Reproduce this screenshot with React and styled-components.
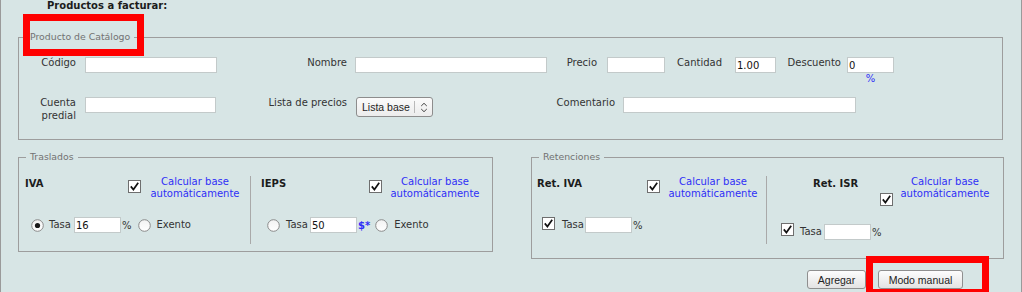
import React from 'react';
import styled, { createGlobalStyle } from 'styled-components';

const GlobalStyle = createGlobalStyle`
  html, body { margin: 0; padding: 0; background: #d7e5e5; }
  body { font-family: "DejaVu Sans", sans-serif; }
`;

const Page = styled.div`
  position: relative;
  box-sizing: border-box;
  width: 1022px;
  height: 292px;
  overflow: hidden;
  background: #d7e5e5;
  border-left: 1px solid #9a9a9a;
  border-right: 1px solid #9a9a9a;
  font-family: "DejaVu Sans", sans-serif;
  font-size: 10px;
  color: #2e2e2e;
`;

const Heading = styled.div`
  padding-left: 46px;
  font-weight: bold;
  font-size: 10px;
  line-height: 12px;
  color: #1c1c1c;
`;

const Fieldset = styled.fieldset`
  box-sizing: border-box;
  flex: none;
  min-width: 0;
  width: ${p => p.$w}px;
  margin: ${p => p.$mt}px 0 0 ${p => p.$ml}px;
  padding: ${p => p.$pt}px 0 ${p => p.$pb}px 0;
  border: 1px solid #9d9d9d;
`;

const Legend = styled.legend`
  margin-left: 7px;
  padding: 0 4px;
  font-size: 9.33px;
  line-height: 12px;
  color: #727272;
`;

const FormRow = styled.div`
  display: flex;
  align-items: flex-start;
  height: ${p => p.$h}px;
`;

const FieldLabel = styled.label`
  box-sizing: border-box;
  flex: none;
  width: ${p => p.$w}px;
  margin-top: -1px;
  text-align: right;
  line-height: 13px;
  color: #333;
`;

const TextInput = styled.input`
  box-sizing: border-box;
  flex: none;
  width: ${p => p.$w}px;
  height: 16px;
  margin: 0 0 0 ${p => p.$ml || 0}px;
  padding: 0 1px;
  border: 1px solid #c3caca;
  background: #fff;
  font: 10px "DejaVu Sans", sans-serif;
  color: #111;
  outline: none;
`;

const InputStack = styled.div`
  display: flex;
  flex-direction: column;
  align-items: center;
  margin-left: ${p => p.$ml}px;
`;

const Unit = styled.span`
  color: ${p => (p.$blue ? '#2f2ff7' : '#333')};
  font-weight: ${p => (p.$bold ? 'bold' : 'normal')};
  font-size: 10px;
  line-height: 11px;
  margin-left: ${p => p.$ml || 0}px;
  flex: none;
`;

const SelectBox = styled.div`
  box-sizing: border-box;
  flex: none;
  display: flex;
  align-items: center;
  width: ${p => p.$w}px;
  height: 20px;
  margin-left: ${p => p.$ml}px;
  padding-left: 5px;
  border: 1px solid #8d8d8d;
  border-radius: 3px;
  background: linear-gradient(#fbfbfb, #ececec);
  font: 10.5px "Liberation Sans", Arial, sans-serif;
  color: #1e1e1e;
`;

const SelectSep = styled.span`
  width: 1px;
  height: 12px;
  margin: 0 5px 0 4px;
  background: #b9b9b9;
`;

const SplitRow = styled.div`
  display: flex;
  align-items: flex-start;
`;

const TaxSection = styled.div`
  box-sizing: border-box;
  flex: none;
  width: ${p => p.$w}px;
  height: 68px;
  display: flex;
  flex-direction: column;
  border-right: ${p => (p.$divider ? '1px solid #a9a9a9' : 'none')};
`;

const SectionHead = styled.div`
  display: flex;
  align-items: flex-start;
  height: ${p => p.$h}px;
`;

const TaxTitle = styled.div`
  flex: none;
  width: ${p => p.$w}px;
  margin: 2px 0 0 ${p => p.$ml}px;
  font-weight: bold;
  line-height: 12px;
  color: #1c1c1c;
`;

const BoxWrap = styled.span`
  display: block;
  flex: none;
  line-height: 0;
  margin-top: ${p => p.$mt || 0}px;
  margin-left: ${p => p.$ml || 0}px;
  align-self: ${p => p.$self || 'auto'};
`;

const AutoCalc = styled.a`
  display: block;
  flex: none;
  width: ${p => p.$w}px;
  text-align: center;
  line-height: 12px;
  color: #2f2ff7;
  text-decoration: none;
`;

const SectionBody = styled.div`
  display: flex;
  align-items: center;
  height: 16px;
  margin-top: ${p => p.$mt}px;
  padding-left: ${p => p.$pl}px;
`;

const InlineText = styled.span`
  flex: none;
  width: ${p => (p.$w ? `${p.$w}px` : 'auto')};
  margin-left: ${p => p.$ml || 0}px;
  color: #333;
  line-height: 12px;
`;

const ButtonRow = styled.div`
  display: flex;
  gap: 12px;
  margin-top: 11px;
  padding-left: 806px;
`;

const Button = styled.button`
  box-sizing: border-box;
  width: ${p => p.$w}px;
  height: 19px;
  padding: 0;
  border: 1px solid #8f8f8f;
  border-radius: 3px;
  background: linear-gradient(#fdfdfd, #e3e3e3);
  font: 10.5px "Liberation Sans", Arial, sans-serif;
  color: #222;
`;

const Highlight = styled.div`
  position: absolute;
  box-sizing: border-box;
  left: ${p => p.$x}px;
  top: ${p => p.$y}px;
  width: ${p => p.$w}px;
  height: ${p => p.$h}px;
  border: 7px solid #ff0000;
  pointer-events: none;
`;

const Check = () => (
  <svg width="13" height="13" viewBox="0 0 13 13">
    <rect x="0.5" y="0.5" width="12" height="12" fill="#fff" stroke="#6e6e6e" />
    <path d="M2.8 6.4 L5.4 9.6 L10.2 2.8" fill="none" stroke="#111" strokeWidth="1.7" strokeLinejoin="miter" />
  </svg>
);

const Radio = ({ on }) => (
  <svg width="13" height="13" viewBox="0 0 13 13">
    <defs>
      <linearGradient id="rg" x1="0" y1="0" x2="0" y2="1">
        <stop offset="0" stopColor="#f2f2f2" />
        <stop offset="1" stopColor="#ffffff" />
      </linearGradient>
    </defs>
    <circle cx="6.5" cy="6.5" r="5.8" fill="url(#rg)" stroke="#8a8a8a" strokeWidth="1" />
    {on && <circle cx="6.5" cy="6.5" r="2.6" fill="#1a1a1a" />}
  </svg>
);

const Chevrons = () => (
  <svg width="8" height="11" viewBox="0 0 8 11">
    <path d="M1.2 4 L4 1.3 L6.8 4 M1.2 7 L4 9.7 L6.8 7" fill="none" stroke="#444" strokeWidth="1" />
  </svg>
);

const CalcText = ({ w }) => (
  <AutoCalc $w={w}>
    Calcular base
    <br />
    automáticamente
  </AutoCalc>
);

export default function App() {
  return (
    <>
      <GlobalStyle />
      <Page>
        <Heading>Productos a facturar:</Heading>

        <Fieldset $w={985} $ml={17} $mt={19} $pt={14} $pb={17}>
          <Legend>Producto de Catálogo</Legend>
          <FormRow $h={40}>
            <FieldLabel $w={57}>Código</FieldLabel>
            <TextInput $w={132} $ml={9} />
            <FieldLabel $w={130}>Nombre</FieldLabel>
            <TextInput $w={192} $ml={8} />
            <FieldLabel $w={50}>Precio</FieldLabel>
            <TextInput $w={58} $ml={10} />
            <FieldLabel $w={57}>Cantidad</FieldLabel>
            <TextInput $w={41} $ml={13} defaultValue="1.00" />
            <FieldLabel $w={65}>Descuento</FieldLabel>
            <InputStack $ml={6}>
              <TextInput $w={47} defaultValue="0" />
              <Unit $blue>%</Unit>
            </InputStack>
          </FormRow>
          <FormRow $h={25}>
            <FieldLabel $w={57}>
              Cuenta
              <br />
              predial
            </FieldLabel>
            <TextInput $w={131} $ml={9} />
            <FieldLabel $w={131}>Lista de precios</FieldLabel>
            <SelectBox $w={77} $ml={9}>
              Lista base
              <SelectSep />
              <Chevrons />
            </SelectBox>
            <FieldLabel $w={182}>Comentario</FieldLabel>
            <TextInput $w={233} $ml={8} />
          </FormRow>
        </Fieldset>

        <SplitRow>
          <Fieldset $w={475} $ml={17} $mt={11} $pt={13} $pb={7}>
            <Legend>Traslados</Legend>
            <FormRow $h={68}>
              <TaxSection $w={232} $divider>
                <SectionHead $h={24}>
                  <TaxTitle $w={103} $ml={6}>IVA</TaxTitle>
                  <BoxWrap $mt={4}><Check /></BoxWrap>
                  <CalcText w={108} />
                </SectionHead>
                <SectionBody $mt={17} $pl={12}>
                  <BoxWrap><Radio on /></BoxWrap>
                  <InlineText $w={25} $ml={5}>Tasa</InlineText>
                  <TextInput $w={47} defaultValue="16" />
                  <Unit $ml={1}>%</Unit>
                  <BoxWrap $ml={6}><Radio /></BoxWrap>
                  <InlineText $ml={6}>Exento</InlineText>
                </SectionBody>
              </TaxSection>
              <TaxSection $w={241}>
                <SectionHead $h={24}>
                  <TaxTitle $w={108} $ml={10}>IEPS</TaxTitle>
                  <BoxWrap $mt={4}><Check /></BoxWrap>
                  <CalcText w={106} />
                </SectionHead>
                <SectionBody $mt={17} $pl={16}>
                  <BoxWrap><Radio /></BoxWrap>
                  <InlineText $w={24} $ml={6}>Tasa</InlineText>
                  <TextInput $w={47} defaultValue="50" />
                  <Unit $blue $bold $ml={1}>$*</Unit>
                  <BoxWrap $ml={5}><Radio /></BoxWrap>
                  <InlineText $ml={6}>Exento</InlineText>
                </SectionBody>
              </TaxSection>
            </FormRow>
          </Fieldset>

          <Fieldset $w={473} $ml={38} $mt={11} $pt={13} $pb={14}>
            <Legend>Retenciones</Legend>
            <FormRow $h={68}>
              <TaxSection $w={235} $divider>
                <SectionHead $h={24}>
                  <TaxTitle $w={110} $ml={5}>Ret. IVA</TaxTitle>
                  <BoxWrap $mt={4}><Check /></BoxWrap>
                  <CalcText w={106} />
                </SectionHead>
                <SectionBody $mt={17} $pl={10}>
                  <BoxWrap $self="flex-start"><Check /></BoxWrap>
                  <InlineText $w={23} $ml={7}>Tasa</InlineText>
                  <TextInput $w={47} />
                  <Unit $ml={1}>%</Unit>
                </SectionBody>
              </TaxSection>
              <TaxSection $w={236}>
                <SectionHead $h={30}>
                  <TaxTitle $w={67} $ml={46}>Ret. ISR</TaxTitle>
                  <BoxWrap $mt={17}><Check /></BoxWrap>
                  <CalcText w={104} />
                </SectionHead>
                <SectionBody $mt={18} $pl={14}>
                  <BoxWrap $self="flex-start" $mt={-1}><Check /></BoxWrap>
                  <InlineText $w={24} $ml={6}>Tasa</InlineText>
                  <TextInput $w={47} />
                  <Unit $ml={1}>%</Unit>
                </SectionBody>
              </TaxSection>
            </FormRow>
          </Fieldset>
        </SplitRow>

        <ButtonRow>
          <Button $w={59}>Agregar</Button>
          <Button $w={85}>Modo manual</Button>
        </ButtonRow>

        <Highlight $x={22} $y={14} $w={121} $h={42} />
        <Highlight $x={865} $y={256} $w={123} $h={40} />
      </Page>
    </>
  );
}
